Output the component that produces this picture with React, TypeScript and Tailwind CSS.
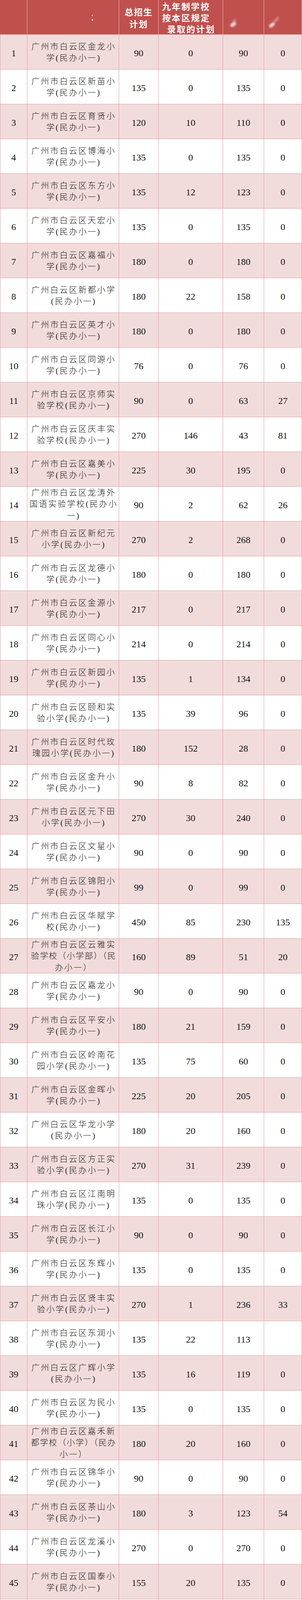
import React from 'react';

type Row = {
  no: number;
  name: string;
  total: string;
  nine: string;
  c5: string;
  c6: string;
};

// name lines are split with "|" where the printed table breaks them
const ROWS: Row[] = [
  { no: 1, name: '广州市白云区金龙小|学(民办小一)', total: '90', nine: '0', c5: '90', c6: '0' },
  { no: 2, name: '广州市白云区新苗小|学(民办小一)', total: '135', nine: '0', c5: '135', c6: '0' },
  { no: 3, name: '广州市白云区育贤小|学(民办小一)', total: '120', nine: '10', c5: '110', c6: '0' },
  { no: 4, name: '广州市白云区博海小|学(民办小一)', total: '135', nine: '0', c5: '135', c6: '0' },
  { no: 5, name: '广州市白云区东方小|学(民办小一)', total: '135', nine: '12', c5: '123', c6: '0' },
  { no: 6, name: '广州市白云区天宏小|学(民办小一)', total: '135', nine: '0', c5: '135', c6: '0' },
  { no: 7, name: '广州市白云区嘉福小|学(民办小一)', total: '180', nine: '0', c5: '180', c6: '0' },
  { no: 8, name: '广州白云区新都小学|(民办小一)', total: '180', nine: '22', c5: '158', c6: '0' },
  { no: 9, name: '广州市白云区英才小|学(民办小一)', total: '180', nine: '0', c5: '180', c6: '0' },
  { no: 10, name: '广州市白云区同源小|学(民办小一)', total: '76', nine: '0', c5: '76', c6: '0' },
  { no: 11, name: '广州市白云区京师实|验学校(民办小一)', total: '90', nine: '0', c5: '63', c6: '27' },
  { no: 12, name: '广州市白云区庆丰实|验学校(民办小一)', total: '270', nine: '146', c5: '43', c6: '81' },
  { no: 13, name: '广州市白云区嘉美小|学(民办小一)', total: '225', nine: '30', c5: '195', c6: '0' },
  { no: 14, name: '广州市白云区龙涛外|国语实验学校(民办小|一)', total: '90', nine: '2', c5: '62', c6: '26' },
  { no: 15, name: '广州市白云区新纪元|小学(民办小一)', total: '270', nine: '2', c5: '268', c6: '0' },
  { no: 16, name: '广州市白云区龙德小|学(民办小一)', total: '180', nine: '0', c5: '180', c6: '0' },
  { no: 17, name: '广州市白云区金源小|学(民办小一)', total: '217', nine: '0', c5: '217', c6: '0' },
  { no: 18, name: '广州市白云区同心小|学(民办小一)', total: '214', nine: '0', c5: '214', c6: '0' },
  { no: 19, name: '广州市白云区新园小|学(民办小一)', total: '135', nine: '1', c5: '134', c6: '0' },
  { no: 20, name: '广州市白云区颐和实|验小学(民办小一)', total: '135', nine: '39', c5: '96', c6: '0' },
  { no: 21, name: '广州市白云区时代玫|瑰园小学(民办小一)', total: '180', nine: '152', c5: '28', c6: '0' },
  { no: 22, name: '广州市白云区金升小|学(民办小一)', total: '90', nine: '8', c5: '82', c6: '0' },
  { no: 23, name: '广州市白云区元下田|小学(民办小一)', total: '270', nine: '30', c5: '240', c6: '0' },
  { no: 24, name: '广州市白云区文星小|学(民办小一)', total: '90', nine: '0', c5: '90', c6: '0' },
  { no: 25, name: '广州市白云区锦阳小|学(民办小一)', total: '99', nine: '0', c5: '99', c6: '0' },
  { no: 26, name: '广州市白云区华赋学|校(民办小一)', total: '450', nine: '85', c5: '230', c6: '135' },
  { no: 27, name: '广州市白云区云雅实|验学校（小学部）（民|办小一）', total: '160', nine: '89', c5: '51', c6: '20' },
  { no: 28, name: '广州市白云区嘉龙小|学(民办小一)', total: '90', nine: '0', c5: '90', c6: '0' },
  { no: 29, name: '广州市白云区平安小|学(民办小一)', total: '180', nine: '21', c5: '159', c6: '0' },
  { no: 30, name: '广州市白云区岭南花|园小学(民办小一)', total: '135', nine: '75', c5: '60', c6: '0' },
  { no: 31, name: '广州市白云区金晖小|学(民办小一)', total: '225', nine: '20', c5: '205', c6: '0' },
  { no: 32, name: '广州白云区华龙小学|(民办小一)', total: '180', nine: '20', c5: '160', c6: '0' },
  { no: 33, name: '广州市白云区方正实|验小学(民办小一)', total: '270', nine: '31', c5: '239', c6: '0' },
  { no: 34, name: '广州市白云区江南明|珠小学(民办小一)', total: '135', nine: '0', c5: '135', c6: '0' },
  { no: 35, name: '广州市白云区长江小|学(民办小一)', total: '90', nine: '0', c5: '90', c6: '0' },
  { no: 36, name: '广州市白云区东辉小|学(民办小一)', total: '135', nine: '0', c5: '135', c6: '0' },
  { no: 37, name: '广州市白云区贤丰实|验小学(民办小一)', total: '270', nine: '1', c5: '236', c6: '33' },
  { no: 38, name: '广州市白云区东润小|学(民办小一)', total: '135', nine: '22', c5: '113', c6: '' },
  { no: 39, name: '广州白云区广辉小学|(民办小一)', total: '135', nine: '16', c5: '119', c6: '0' },
  { no: 40, name: '广州市白云区为民小|学(民办小一)', total: '135', nine: '0', c5: '135', c6: '0' },
  { no: 41, name: '广州市白云区嘉禾新|都学校（小学）（民办|小一）', total: '180', nine: '20', c5: '160', c6: '0' },
  { no: 42, name: '广州市白云区锦华小|学(民办小一)', total: '90', nine: '0', c5: '90', c6: '0' },
  { no: 43, name: '广州市白云区茶山小|学(民办小一)', total: '180', nine: '3', c5: '123', c6: '54' },
  { no: 44, name: '广州市白云区龙溪小|学(民办小一)', total: '270', nine: '0', c5: '270', c6: '0' },
  { no: 45, name: '广州市白云区国泰小|学(民办小一)', total: '155', nine: '20', c5: '135', c6: '0' },
  { no: 46, name: '广州市白云区龙江小|学(民办小一)', total: '180', nine: '0', c5: '180', c6: '0' },
  { no: 47, name: '广州市白云区中黄外|国语小学(民办小一)', total: '180', nine: '44', c5: '82', c6: '54' },
  { no: 48, name: '广州市白云区方圆实|验小学(民办小一)', total: '270', nine: '265', c5: '1', c6: '4' },
  { no: 49, name: '广州市白云区龙涛外|国语实验小学(民办小|一)', total: '135', nine: '0', c5: '95', c6: '40' },
  { no: 50, name: '广州市白云区广州培|文外国语学校(民办小|一)', total: '270', nine: '174', c5: '70', c6: '26' },
  { no: 51, name: '广州华联外语实验学|校(民办小一)', total: '180', nine: '20', c5: '106', c6: '54' },
  { no: 52, name: '广州市白云区贤丰第|二实验小学(民办小|一)', total: '270', nine: '1', c5: '269', c6: '0' },
  { no: 53, name: '广州市白云区小太阳|小学(民办小一)', total: '180', nine: '20', c5: '160', c6: '0' },
  { no: 54, name: '广州市白云区才子小|学(民办小一)', total: '135', nine: '0', c5: '135', c6: '0' },
  { no: 55, name: '广州市白云区金星小|学(民办小一)', total: '225', nine: '58', c5: '167', c6: '0' },
  { no: 56, name: '广州市白云区龙嘉小|学(民办小一)', total: '180', nine: '20', c5: '160', c6: '0' },
  { no: 57, name: '广州市白云区蓝山小|学(民办小一)', total: '135', nine: '43', c5: '92', c6: '0' },
  { no: 58, name: '广州市白云区广云外|国语学校(民办小一)', total: '180', nine: '10', c5: '116', c6: '54' },
  { no: 59, name: '广州市白云区广州源|雅学校（小学部）（民|办小一）', total: '180', nine: '19', c5: '107', c6: '54' },
  { no: 60, name: '广州市白云区白云实|验学校(民办小一)', total: '180', nine: '31', c5: '99', c6: '50' },
  { no: 61, name: '广州市白云区启明小|学(民办小一)', total: '135', nine: '16', c5: '119', c6: '' },
  { no: 62, name: '广州市白云区新正小|学(民办小一)', total: '135', nine: '0', c5: '135', c6: '0' },
  { no: 63, name: '广州市白云区龙兴小|学(民办小一)', total: '270', nine: '49', c5: '176', c6: '45' },
  { no: 64, name: '广州市白云区华丰小|学(民办小一)', total: '180', nine: '20', c5: '160', c6: '0' },
  { no: 65, name: '广州市白云区金华小|学(民办小一)', total: '135', nine: '20', c5: '115', c6: '' },
  { no: 66, name: '广州市白云区诚美实|验小学(民办小一)', total: '180', nine: '0', c5: '180', c6: '0' },
  { no: 67, name: '广州市白云区金碧新|城小学(民办小一)', total: '180', nine: '145', c5: '35', c6: '0' },
  { no: 68, name: '广州市白云区春蕾小|学(民办小一)', total: '180', nine: '2', c5: '178', c6: '0' }
];

const GRID =
  'grid grid-cols-[70px_235px_101px_165px_105px_97px] grid-rows-[89px] h-[89px] max-h-[89px] shrink-0 overflow-hidden';
const HEAD_CELL = 'relative border-r border-[#e8b9b8] h-[89px] min-h-0';
const BODY_CELL = 'flex items-center justify-center border-r border-b border-[#d9a09e] h-[89px] min-h-0 overflow-hidden';
const NUM = 'block text-[24px] leading-[24px] pt-[6px] text-[#141414]';

// full-width brackets make a line wider than the cell, so those lines get tighter tracking
function lineTracking(line: string) {
  return line.includes('（') && line.length >= 10 ? 'tracking-[1.9px]' : 'tracking-[3px]';
}

function HeaderRow() {
  return (
    <div className={`${GRID} bg-[#c0504d] text-white font-bold`}>
      <div className={`${HEAD_CELL} border-b`} />
      <div className={`${HEAD_CELL} border-b`}>
        <span className="absolute left-[165px] top-[38px] h-[3px] w-[2px] bg-white/90" />
        <span className="absolute left-[165px] top-[49px] h-[4px] w-[3px] bg-white/90" />
      </div>
      <div className={`${HEAD_CELL} border-b flex flex-col items-center justify-center pt-[5px] text-[22px] leading-[31px] tracking-[2px]`}>
        <div>总招生</div>
        <div>计划</div>
      </div>
      <div className={`${HEAD_CELL} border-b flex flex-col justify-center pt-[5px] pl-[9px] text-[22px] leading-[29px] tracking-[2.6px] whitespace-nowrap overflow-hidden`}>
        <div>九年制学校</div>
        <div>按本区规定</div>
        <div className="pl-[13px]">录取的计划</div>
      </div>
      <div className={`${HEAD_CELL} border-b overflow-hidden`}>
        <span className="absolute left-[18px] top-[58px] h-[9px] w-[16px] -rotate-[35deg] rounded-full bg-white/80 blur-[2px]" />
        <span className="absolute left-[24px] top-[50px] h-[6px] w-[10px] -rotate-[45deg] rounded-full bg-white/30 blur-[2px]" />
      </div>
      <div className={`${HEAD_CELL} border-b overflow-hidden`}>
        <span className="absolute left-[12px] top-[60px] h-[8px] w-[16px] -rotate-[40deg] rounded-full bg-white/80 blur-[2px]" />
        <span className="absolute left-[22px] top-[48px] h-[6px] w-[18px] -rotate-[50deg] rounded-full bg-white/35 blur-[2px]" />
      </div>
    </div>
  );
}

function BodyRow({ row, shaded }: { row: Row; shaded: boolean }) {
  const lines = row.name.split('|');
  return (
    <div className={`${GRID} ${shaded ? 'bg-[#f2dcdb]' : 'bg-white'}`}>
      <div className={`${BODY_CELL} border-l`}>
        <span className={NUM}>{row.no}</span>
      </div>
      <div className={`${BODY_CELL} flex-col text-[21px] leading-[29.5px] text-[#1a1a1a] font-light whitespace-nowrap pt-[2px]`}>
        {lines.map((line, index) => (
          <div key={index} className={`${lineTracking(line)} pl-[3px] h-[29.5px]`}>
            {line}
          </div>
        ))}
      </div>
      <div className={BODY_CELL}>
        <span className={NUM}>{row.total}</span>
      </div>
      <div className={BODY_CELL}>
        <span className={NUM}>{row.nine}</span>
      </div>
      <div className={BODY_CELL}>
        <span className={NUM}>{row.c5}</span>
      </div>
      <div className={BODY_CELL}>
        <span className={NUM}>{row.c6}</span>
      </div>
    </div>
  );
}

export default function App() {
  return (
    <div className="flex w-[773px] flex-col bg-white font-['Liberation_Serif','Noto_Sans_CJK_SC',serif]">
      <HeaderRow />
      {ROWS.map((row, index) => (
        <BodyRow key={row.no} row={row} shaded={index % 2 === 0} />
      ))}
    </div>
  );
}
